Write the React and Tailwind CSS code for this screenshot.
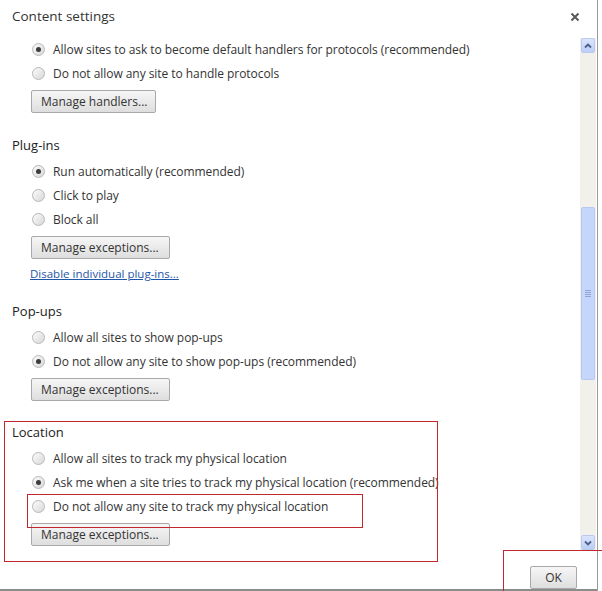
import React from "react";

const font = { fontFamily: '"Open Sans", "Liberation Sans", sans-serif' };

function Radio({ checked, label }) {
  return (
    <div className="flex h-[24px] items-center pl-[32px]">
      <div className="flex h-[13px] w-[13px] items-center justify-center rounded-full border border-[#b8b8b8] bg-gradient-to-br from-[#fbfbfb] to-[#d8d8d8]">
        {checked && <div className="h-[5px] w-[5px] rounded-full bg-[#3c3c3c]" />}
      </div>
      <span className="ml-[8px] pt-[2px] text-[12px] tracking-[-0.05px] text-[#333]">{label}</span>
    </div>
  );
}

function Btn({ children, className = "" }) {
  return (
    <div
      className={
        "flex h-[23px] items-center rounded-[2px] border border-[#a9a9a9] bg-gradient-to-b from-[#f6f6f6] to-[#dedede] text-[12px] text-[#333] " +
        className
      }
    >
      {children}
    </div>
  );
}

function Heading({ children, className = "" }) {
  return (
    <div className={"flex h-[20px] items-center pt-[2px] pl-[12px] text-[13px] text-[#222] " + className}>
      {children}
    </div>
  );
}

export default function App() {
  return (
    <div className="relative flex h-[591px] w-[602px] overflow-hidden bg-white" style={font}>
      <div className="flex w-[597px] flex-col">
        {/* header */}
        <div className="flex h-[37px] items-start justify-between pl-[12px] pr-[17px] pt-[6px]">
          <span className="text-[13.5px] text-[#333]">Content settings</span>
          <svg width="10" height="10" viewBox="0 0 10 10" className="mt-[6px]">
            <path d="M1.5 1.5 L8.5 8.5 M8.5 1.5 L1.5 8.5" stroke="#5a5a5a" strokeWidth="2" />
          </svg>
        </div>
        {/* body */}
        <div className="flex h-[514px]">
          <div className="flex w-[580px] flex-col">
            <Radio checked label="Allow sites to ask to become default handlers for protocols (recommended)" />
            <Radio label="Do not allow any site to handle protocols" />
            <div className="ml-[31px] mt-[5px]">
              <Btn className="w-[125px] pl-[9px]">Manage handlers...</Btn>
            </div>

            <Heading className="mt-[22px]">Plug-ins</Heading>
            <div className="mt-[4px]">
              <Radio checked label="Run automatically (recommended)" />
              <Radio label="Click to play" />
              <Radio label="Block all" />
            </div>
            <div className="ml-[31px] mt-[5px]">
              <Btn className="w-[139px] pl-[9px]">Manage exceptions...</Btn>
            </div>
            <div className="ml-[30px] mt-[5px] flex h-[18px] items-center pt-[1px]">
              <span className="text-[11.5px] text-[#1f56a8] underline">Disable individual plug-ins...</span>
            </div>

            <Heading className="mt-[19px]">Pop-ups</Heading>
            <div className="mt-[4px]">
              <Radio label="Allow all sites to show pop-ups" />
              <Radio checked label="Do not allow any site to show pop-ups (recommended)" />
            </div>
            <div className="ml-[31px] mt-[5px]">
              <Btn className="w-[139px] pl-[9px]">Manage exceptions...</Btn>
            </div>

            <Heading className="mt-[21px]">Location</Heading>
            <div className="mt-[4px]">
              <Radio label="Allow all sites to track my physical location" />
              <Radio checked label="Ask me when a site tries to track my physical location (recommended)" />
              <Radio label="Do not allow any site to track my physical location" />
            </div>
            <div className="ml-[31px] mt-[5px]">
              <Btn className="w-[139px] pl-[9px]">Manage exceptions...</Btn>
            </div>
          </div>
          {/* scrollbar */}
          <div className="mt-[1px] flex w-[16px] flex-col bg-[#f1f0ea] px-[1px]">
            <div className="flex h-[15px] items-center justify-center rounded-[2px] border border-[#b9c9f0] bg-gradient-to-b from-[#dbe5fd] to-[#bccdf7]">
              <svg width="8" height="6" viewBox="0 0 8 6">
                <path d="M1 4.5 L4 1.5 L7 4.5" stroke="#4b5f8a" strokeWidth="1.8" fill="none" />
              </svg>
            </div>
            <div className="h-[154px]" />
            <div className="flex h-[173px] flex-col items-center justify-center rounded-[2px] border border-[#b6c7f3] bg-[#c6d5fb]">
              <div className="flex flex-col gap-[1px]">
                <div className="h-px w-[6px] bg-[#8fa3d4]" />
                <div className="h-px w-[6px] bg-[#8fa3d4]" />
                <div className="h-px w-[6px] bg-[#8fa3d4]" />
                <div className="h-px w-[6px] bg-[#8fa3d4]" />
              </div>
            </div>
            <div className="flex-1" />
            <div className="mb-[1px] flex h-[15px] items-center justify-center rounded-[2px] border border-[#b9c9f0] bg-gradient-to-b from-[#dbe5fd] to-[#bccdf7]">
              <svg width="8" height="6" viewBox="0 0 8 6">
                <path d="M1 1.5 L4 4.5 L7 1.5" stroke="#4b5f8a" strokeWidth="1.8" fill="none" />
              </svg>
            </div>
          </div>
          <div className="w-[1px]" />
        </div>
        {/* footer */}
        <div className="flex flex-1 flex-col">
          <div className="flex flex-1 items-start justify-end pr-[20px] pt-[15px]">
            <Btn className="w-[47px] justify-center">OK</Btn>
          </div>
          <div className="h-[2px] bg-[#8c8c8c]" />
        </div>
      </div>
      <div className="w-[1px] bg-[#9a9a9a]" />
      <div className="flex-1 bg-white" />

      {/* annotation boxes */}
      <div className="absolute left-[4px] top-[421px] h-[141px] w-[434px] border border-[#c0282d]" />
      <div className="absolute left-[27px] top-[494px] h-[34px] w-[336px] border border-[#c0282d]" />
      <div className="absolute left-[503px] top-[550px] h-[60px] w-[120px] border border-[#c0282d]" />
    </div>
  );
}
